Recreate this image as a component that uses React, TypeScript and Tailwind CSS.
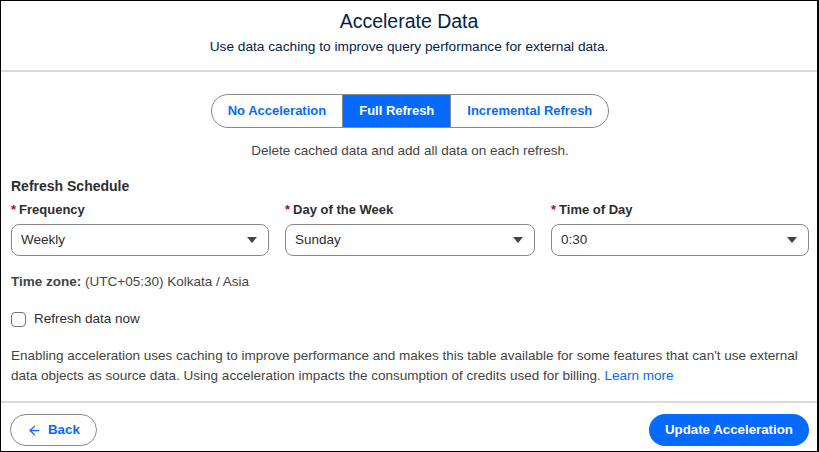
import { ArrowLeft } from "lucide-react";

const modes = ["No Acceleration", "Full Refresh", "Incremental Refresh"];

const fields = [
  { label: "Frequency", value: "Weekly", w: "w-[258px]" },
  { label: "Day of the Week", value: "Sunday", w: "w-[250px]" },
  { label: "Time of Day", value: "0:30", w: "w-[258px]" },
];

function Caret() {
  return (
    <svg width="12" height="8" viewBox="0 0 12 8" className="shrink-0">
      <path d="M1 1h10L6 7z" fill="#444" />
    </svg>
  );
}

export default function App() {
  return (
    <div
      className="w-[819px] h-[452px] bg-white border border-r-2 border-black flex flex-col overflow-hidden text-[#444]"
      style={{ fontFamily: "'Liberation Sans', Arial, sans-serif" }}
    >
      {/* header */}
      <div className="h-[71px] flex flex-col items-center pt-[7px] border-b-2 border-[#d9d9d9]">
        <h1 className="text-[19.5px] leading-[26px] text-[#03234d]">Accelerate Data</h1>
        <p className="mt-[4px] text-[13.7px] leading-[18px] text-[#03234d]">
          Use data caching to improve query performance for external data.
        </p>
      </div>

      {/* body */}
      <div className="flex-1 pl-[10px] pr-[8px] pt-[22px]">
        <div className="flex justify-center">
          <div className="flex h-[34px] rounded-full border border-[#8a8a8a] overflow-hidden">
            {modes.map((m) => (
              <div
                key={m}
                className={
                  m === "Full Refresh"
                    ? "px-[16px] flex items-center text-[13px] font-bold bg-[#066afe] text-white"
                    : "px-[16px] flex items-center text-[13px] font-bold text-[#066afe] border-[#8a8a8a] first:border-r last:border-l"
                }
              >
                {m}
              </div>
            ))}
          </div>
        </div>
        <p className="text-center text-[13.5px] leading-[18px] mt-[14px]">
          Delete cached data and add all data on each refresh.
        </p>

        <h2 className="mt-[17px] text-[14px] leading-[18px] font-bold text-[#2e2e2e]">Refresh Schedule</h2>
        <div className="mt-[6px] flex justify-between">
          {fields.map((f) => (
            <div key={f.label} className={f.w}>
              <div className="text-[13px] leading-[18px] font-bold text-[#2e2e2e]">
                <span className="text-[#ba0517] mr-[3px]">*</span>
                {f.label}
              </div>
              <div className="mt-[5px] h-[32px] rounded-[8px] border border-[#8a8a8a] flex items-center justify-between pl-[9px] pr-[10px] text-[13.5px] text-[#2e2e2e]">
                <span>{f.value}</span>
                <Caret />
              </div>
            </div>
          ))}
        </div>

        <p className="mt-[17px] text-[13.5px] leading-[18px]">
          <span className="font-bold">Time zone:</span> (UTC+05:30) Kolkata / Asia
        </p>

        <label className="mt-[19px] flex items-center gap-[8px] text-[13.5px] leading-[18px] text-[#2e2e2e]">
          <span className="w-[15px] h-[15px] rounded-[4px] border border-[#747474] bg-white" />
          Refresh data now
        </label>

        <p className="mt-[18px] text-[13.5px] leading-[20px]">
          Enabling acceleration uses caching to improve performance and makes this table available for some
          features that can't use external data objects as source data. Using acceleration impacts the
          consumption of credits used for billing. <span className="text-[#066afe]">Learn more</span>
        </p>
      </div>

      {/* footer */}
      <div className="h-[50px] border-t-2 border-[#d9d9d9] flex items-start justify-between pl-[9px] pr-[8px] pt-[11px]">
        <button className="h-[32px] rounded-full border border-[#8a8a8a] px-[16px] flex items-center gap-[6px] text-[13.3px] font-bold text-[#066afe]">
          <ArrowLeft size={15} strokeWidth={2} />
          Back
        </button>
        <button className="h-[32px] rounded-full bg-[#066afe] px-[16px] text-[13.3px] font-bold text-white">
          Update Acceleration
        </button>
      </div>
    </div>
  );
}
